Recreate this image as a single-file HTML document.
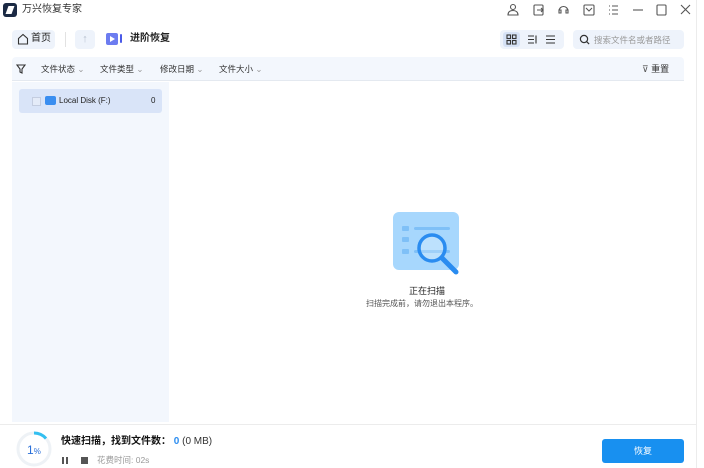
<!DOCTYPE html>
<html><head><meta charset="utf-8"><style>
*{margin:0;padding:0;box-sizing:border-box}
body{width:704px;height:468px;background:#fff;font-family:"Liberation Sans","Noto Sans CJK SC",sans-serif;position:relative;overflow:hidden;color:#222;font-size:9px}
.a{position:absolute;line-height:1.2}
.edge{left:696px;top:0;width:8px;height:468px;background:#fff;border-left:1px solid #ececec}
</style></head><body>
<div class="a" style="left:3px;top:3px;width:14px;height:14px;background:#1b2a44;border-radius:3px"></div>
<div class="a" style="left:7px;top:6px;width:6px;height:8px;background:#fff;transform:skewX(-20deg)"></div>
<div class="a" style="left:22px;top:4px;font-size:10px;color:#333">万兴恢复专家</div>
<svg class="a" style="left:505px;top:3px" width="190" height="14" fill="none" stroke="#555" stroke-width="1.1">
<circle cx="8" cy="4" r="2.5"/><path d="M3 12c0-3 2-4.5 5-4.5s5 1.5 5 4.5z"/>
<rect x="29" y="2" width="9" height="10" rx="1"/><path d="M32 7h6M36 5l2 2-2 2"/>
<path d="M54 8a4.5 4.5 0 0 1 9 0M54 7v3h2V7zM61 7v3h2V7z"/>
<rect x="79" y="2" width="10" height="10" rx="1"/><path d="M81 5l3 3 3-3"/>
<path d="M104 3h1M107 3h6M104 7h1M107 7h6M104 11h1M107 11h6"/>
<path d="M128 7h10"/>
<rect x="152" y="2" width="9" height="10" rx="1"/>
<path d="M176 2l9 9M185 2l-9 9"/>
</svg>
<div class="a" style="left:12px;top:30px;width:43px;height:19px;background:#eef3fb;border-radius:4px"></div>
<svg class="a" style="left:17px;top:33px" width="12" height="12" fill="none" stroke="#333" stroke-width="1.1"><path d="M1.5 5.5L6 1.5l4.5 4V11h-9z"/></svg>
<div class="a" style="left:31px;top:33px;font-size:10px">首页</div>
<div class="a" style="left:65px;top:32px;width:1px;height:15px;background:#e2e2e2"></div>
<div class="a" style="left:75px;top:30px;width:20px;height:19px;background:#eef3fb;border-radius:4px;color:#b8c2d0;text-align:center;font-size:11px;line-height:19px">↑</div>
<div class="a" style="left:106px;top:33px;width:12px;height:12px;background:#6c7cf0;border-radius:2px"></div>
<div class="a" style="left:110px;top:36px;width:0;height:0;border-left:5px solid #fff;border-top:3px solid transparent;border-bottom:3px solid transparent"></div>
<div class="a" style="left:120px;top:34px;width:2px;height:9px;background:#4a5ae8;border-radius:1px"></div>
<div class="a" style="left:130px;top:33px;font-size:10px;font-weight:bold">进阶恢复</div>
<div class="a" style="left:500px;top:30px;width:64px;height:19px;background:#eef3fb;border-radius:4px"></div>
<div class="a" style="left:503px;top:32px;width:17px;height:15px;background:#d6e2f6;border-radius:3px"></div>
<svg class="a" style="left:506px;top:34px" width="60" height="11" fill="none" stroke="#333" stroke-width="1.1">
<rect x="1" y="1" width="3.5" height="3.5"/><rect x="6.5" y="1" width="3.5" height="3.5"/><rect x="1" y="6.5" width="3.5" height="3.5"/><rect x="6.5" y="6.5" width="3.5" height="3.5"/>
<path d="M22 2h6M22 5.5h6M22 9h6M30 1.5v8"/>
<path d="M40 2h9M40 5.5h9M40 9h9"/>
</svg>
<div class="a" style="left:573px;top:30px;width:111px;height:19px;background:#eef3fb;border-radius:4px"></div>
<svg class="a" style="left:579px;top:34px" width="11" height="11" fill="none" stroke="#333" stroke-width="1.2"><circle cx="5" cy="5" r="3.6"/><path d="M7.6 7.6l2.5 2.5"/></svg>
<div class="a" style="left:594px;top:35px;font-size:8.5px;color:#999">搜索文件名或者路径</div>
<div class="a" style="left:12px;top:57px;width:672px;height:24px;background:#f3f7fd;border-bottom:1px solid #e4e9f0;border-radius:4px 4px 0 0"></div>
<svg class="a" style="left:16px;top:64px" width="10" height="10" fill="none" stroke="#333" stroke-width="1.1"><path d="M1 1h8L6 5v4L4 8V5z"/></svg>
<div class="a" style="left:41px;top:64px;font-size:8.5px;color:#333">文件状态 <span style="color:#999">⌄</span></div>
<div class="a" style="left:100px;top:64px;font-size:8.5px;color:#333">文件类型 <span style="color:#999">⌄</span></div>
<div class="a" style="left:160px;top:64px;font-size:8.5px;color:#333">修改日期 <span style="color:#999">⌄</span></div>
<div class="a" style="left:219px;top:64px;font-size:8.5px;color:#333">文件大小 <span style="color:#999">⌄</span></div>
<div class="a" style="left:642px;top:64px;font-size:9px;color:#555">⊽ <span style="color:#333">重置</span></div>
<div class="a" style="left:12px;top:82px;width:157px;height:340px;background:#f3f7fd"></div>
<div class="a" style="left:19px;top:89px;width:143px;height:24px;background:#d9e4f8;border-radius:3px"></div>
<div class="a" style="left:32px;top:97px;width:9px;height:9px;border:1px solid #c4cde0;background:#e4ebf8"></div>
<div class="a" style="left:45px;top:96px;width:11px;height:9px;background:#3a8ef0;border-radius:2px"></div>
<div class="a" style="left:59px;top:96px;font-size:8px">Local Disk (F:)</div>
<div class="a" style="left:151px;top:96px;font-size:8px">0</div>
<div class="a" style="left:393px;top:212px;width:66px;height:58px;background:#a7d7fd;border-radius:6px"></div>
<div class="a" style="left:402px;top:226px;width:7px;height:5px;background:#7fc0f7;border-radius:1px"></div>
<div class="a" style="left:402px;top:237px;width:7px;height:5px;background:#7fc0f7;border-radius:1px"></div>
<div class="a" style="left:402px;top:249px;width:7px;height:5px;background:#7fc0f7;border-radius:1px"></div>
<div class="a" style="left:414px;top:227px;width:36px;height:3px;background:#7fc0f7;border-radius:2px"></div>
<div class="a" style="left:414px;top:250px;width:36px;height:3px;background:#7fc0f7;border-radius:2px"></div>
<svg class="a" style="left:412px;top:228px" width="52" height="52" fill="none"><circle cx="20" cy="20" r="13" stroke="#2a8cf0" stroke-width="3.5" fill="rgba(255,255,255,.25)"/><path d="M30 30l14 14" stroke="#2a8cf0" stroke-width="5" stroke-linecap="round"/></svg>
<div class="a" style="left:409px;top:286px;font-size:9px;color:#222">正在扫描</div>
<div class="a" style="left:366px;top:299px;font-size:8px;color:#555">扫描完成前，请勿退出本程序。</div>
<div class="a" style="left:0;top:424px;width:696px;height:1px;background:#ececec"></div>
<svg class="a" style="left:15px;top:430px" width="38" height="38"><circle cx="19" cy="19" r="16" fill="none" stroke="#eef2f6" stroke-width="3"/><path d="M19 3a16 16 0 0 1 12 5.5" fill="none" stroke="#33bff0" stroke-width="3"/></svg>
<div class="a" style="left:27px;top:443px;font-size:12px;color:#2a6fd8">1<span style="font-size:8px">%</span></div>
<div class="a" style="left:61px;top:436px;font-size:10px;font-weight:bold;color:#111">快速扫描，找到文件数： <span style="color:#2a8cf0">0</span> <span style="font-weight:normal;color:#333">(0 MB)</span></div>
<div class="a" style="left:62px;top:457px;width:2px;height:7px;background:#555"></div>
<div class="a" style="left:66px;top:457px;width:2px;height:7px;background:#555"></div>
<div class="a" style="left:81px;top:457px;width:7px;height:7px;background:#555"></div>
<div class="a" style="left:97px;top:455px;font-size:8.5px;color:#999">花费时间:  02s</div>
<div class="a" style="left:602px;top:439px;width:82px;height:24px;background:#1890f0;border-radius:3px;color:#fff;text-align:center;line-height:24px;font-size:9px">恢复</div>
<div class="a edge"></div>
</body></html>
